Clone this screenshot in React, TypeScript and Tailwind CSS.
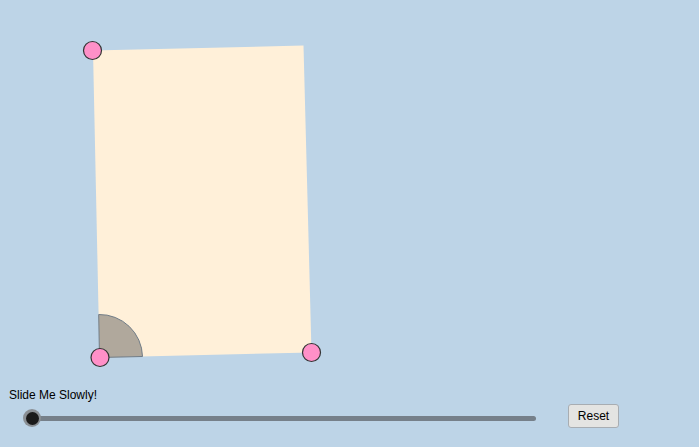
export default function App() {
  return (
    <div
      className="w-[699px] h-[447px] bg-[#bdd4e7] flex flex-col overflow-hidden"
      style={{ fontFamily: '"Liberation Sans", Arial, sans-serif' }}
    >
      {/* drawing canvas */}
      <svg width="699" height="389" viewBox="0 0 699 389" className="block shrink-0">
        <polygon points="93,50.5 303.5,45.5 311.5,352.5 99.5,357.5" fill="#fff0d9" />
        <path
          d="M99.5 357.5 L98.7 314.5 A43 43 0 0 1 142.5 356.5 Z"
          fill="#b0a89c"
          stroke="#6f7b86"
          strokeWidth="1"
        />
        <circle cx="92.5" cy="50.5" r="9" fill="#ff90c8" stroke="#333" strokeWidth="1.2" />
        <circle cx="100" cy="357.5" r="9" fill="#ff90c8" stroke="#333" strokeWidth="1.2" />
        <circle cx="311.5" cy="352.5" r="9" fill="#ff90c8" stroke="#333" strokeWidth="1.2" />
      </svg>

      <div className="pl-[9px] text-[12px] leading-[13px] text-black h-[15px]">Slide Me Slowly!</div>

      <div className="flex items-start">
        <div className="relative ml-[31px] mt-[11.5px] w-[505px] h-[5px] rounded-full bg-[#76808a]">
          <div className="absolute left-[-8px] top-[-6.5px] w-[18px] h-[18px] rounded-full bg-[#8a8f94] flex items-center justify-center">
            <div className="w-[13px] h-[13px] rounded-full bg-[#1a1a1a]" />
          </div>
        </div>
        <button className="ml-[32px] w-[51px] h-[24px] bg-[#e4e4e2] border border-[#a8adb2] rounded-[3px] text-[12px] text-black leading-none">
          Reset
        </button>
      </div>
    </div>
  );
}
